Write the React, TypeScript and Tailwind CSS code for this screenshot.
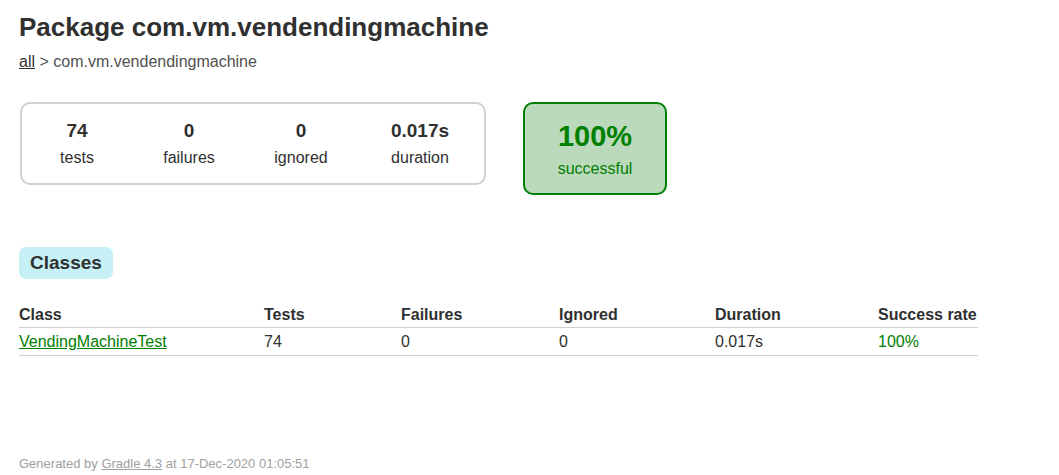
import React from "react";

export default function App() {
  const font = { fontFamily: '"Liberation Sans", Arial, sans-serif' };
  const cols = [
    { label: "Class", w: "w-[245px]" },
    { label: "Tests", w: "w-[137px]" },
    { label: "Failures", w: "w-[158px]" },
    { label: "Ignored", w: "w-[156px]" },
    { label: "Duration", w: "w-[163px]" },
    { label: "Success rate", w: "w-[99px]" },
  ];
  return (
    <div className="w-[1059px] h-[475px] bg-white text-[#303030] px-[19px] pt-[12px] relative" style={font}>
      <h1 className="text-[26px] font-bold leading-[30px]">Package com.vm.vendendingmachine</h1>
      <div className="text-[16px] leading-[18px] mt-[11px] text-[#505050]">
        <a className="underline text-[#303030]">all</a> &gt; com.vm.vendendingmachine
      </div>
      <div className="flex items-start mt-[31px]">
        <div className="ml-[1px] w-[466px] h-[83px] border-2 border-[#d0d0d0] rounded-[10px] flex items-center">
          {[
            ["74", "tests", "w-[110px]"],
            ["0", "failures", "w-[114px]"],
            ["0", "ignored", "w-[110px]"],
            ["0.017s", "duration", "w-[128px]"],
          ].map(([n, l, w]) => (
            <div key={l} className={`${w} flex flex-col items-center`}>
              <div className="text-[19px] font-bold leading-[22px]">{n}</div>
              <div className="text-[16px] leading-[18px] mt-[7px]">{l}</div>
            </div>
          ))}
        </div>
        <div className="ml-[37px] w-[144px] h-[93px] bg-[#bbd9bb] border-2 border-[#008000] rounded-[10px] flex flex-col items-center justify-center text-[#008000]">
          <div className="text-[29px] font-bold leading-[32px]">100%</div>
          <div className="text-[16px] leading-[18px] mt-[8px]">successful</div>
        </div>
      </div>
      <div className="mt-[52px] inline-block bg-[#c5f0f5] rounded-[7px] px-[11px] h-[32px] leading-[32px] text-[19px] font-bold">
        Classes
      </div>
      <div className="mt-[27px] w-[959px]">
        <div className="flex border-b border-[#d0d0d0] h-[22px] items-end pb-[3px]">
          {cols.map((c) => (
            <div key={c.label} className={`${c.w} text-[16px] font-bold leading-[18px] whitespace-nowrap`}>
              {c.label}
            </div>
          ))}
        </div>
        <div className="flex border-b border-[#d0d0d0] h-[28px] items-center text-[16px]">
          <div className="w-[245px]">
            <a className="underline text-[#008000]">VendingMachineTest</a>
          </div>
          <div className="w-[137px]">74</div>
          <div className="w-[158px]">0</div>
          <div className="w-[156px]">0</div>
          <div className="w-[163px]">0.017s</div>
          <div className="w-[99px] text-[#008000]">100%</div>
        </div>
      </div>
      <div className="absolute left-[19px] top-[456px] text-[13px] leading-[15px] text-[#a0a0a0]">
        Generated by <a className="underline text-[#a0a0a0]">Gradle 4.3</a> at 17-Dec-2020 01:05:51
      </div>
    </div>
  );
}
